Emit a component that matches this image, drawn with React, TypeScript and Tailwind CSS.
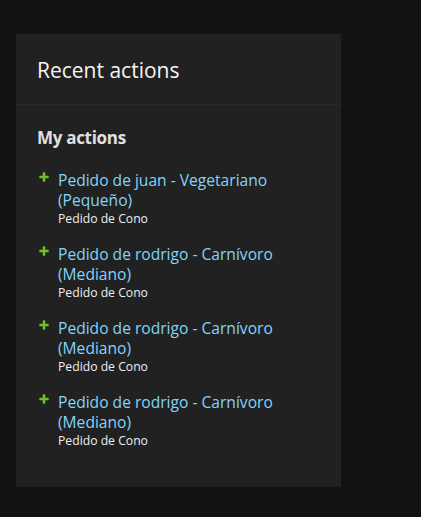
import React from "react";

const items = [
  { title: "Pedido de juan - Vegetariano (Pequeño)", sub: "Pedido de Cono" },
  { title: "Pedido de rodrigo - Carnívoro (Mediano)", sub: "Pedido de Cono" },
  { title: "Pedido de rodrigo - Carnívoro (Mediano)", sub: "Pedido de Cono" },
  { title: "Pedido de rodrigo - Carnívoro (Mediano)", sub: "Pedido de Cono" },
];

function AddIcon() {
  return (
    <svg width="12" height="12" viewBox="0 0 1792 1792" className="shrink-0">
      <path
        fill="#70bf2b"
        d="M1600 796v192q0 40-28 68t-68 28h-416v416q0 40-28 68t-68 28h-192q-40 0-68-28t-28-68v-416h-416q-40 0-68-28t-28-68v-192q0-40 28-68t68-28h416v-416q0-40 28-68t68-28h192q40 0 68 28t28 68v416h416q40 0 68 28t28 68z"
      />
    </svg>
  );
}

export default function App() {
  return (
    <div
      className="min-h-[517px] w-[421px] bg-[#121212] pt-[34px] pl-[16px]"
      style={{ fontFamily: '"Open Sans", "Noto Sans", sans-serif' }}
    >
      <div className="w-[325px] h-[453px] bg-[#212121]">
        <div className="h-[71px] flex items-center px-[21px] pt-[3px] border-b border-[#2a2a2a]">
          <h2 className="text-[21px] text-[#f5f5f5]">Recent actions</h2>
        </div>
        <div className="px-[21px] pt-[22px]">
          <h3 className="text-[17px] font-bold text-[#e0e0e0] leading-[22px] tracking-[-0.3px]">My actions</h3>
          <ul className="mt-[21px] flex flex-col gap-[16px]">
            {items.map((it, i) => (
              <li key={i} className="flex">
                <div className="w-[21px] pt-[1px] pl-[1px]">
                  <AddIcon />
                </div>
                <div className="flex flex-col">
                  <a className="text-[15.6px] leading-[20px] text-[#81d4fa] w-[250px]">
                    {it.title}
                  </a>
                  <span className="text-[12.2px] leading-[18px] text-[#eeeeee]">{it.sub}</span>
                </div>
              </li>
            ))}
          </ul>
        </div>
      </div>
    </div>
  );
}
